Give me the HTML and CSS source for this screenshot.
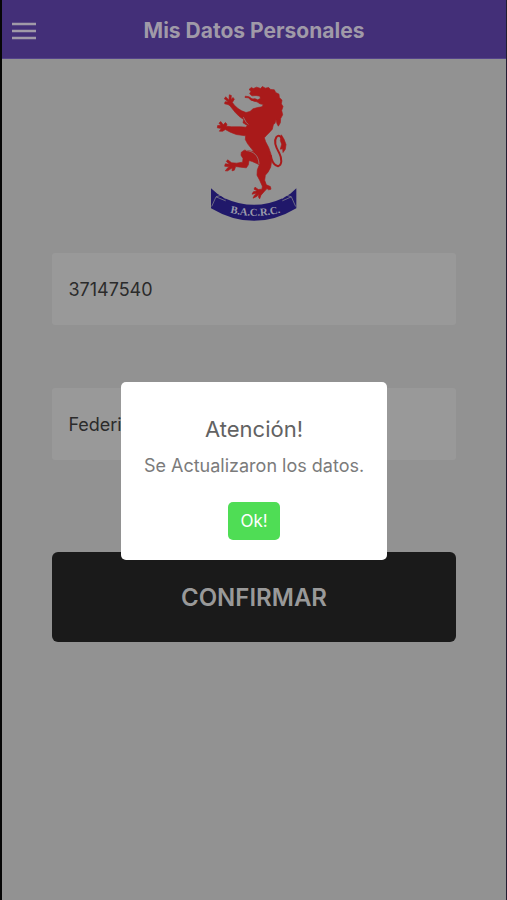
FILE: index.html
```html
<!DOCTYPE html>
<html lang="es">

<head>
  <meta charset="utf-8">
  <meta name="viewport" content="width=device-width, initial-scale=1">
  <title>Mis Datos Personales</title>
  <link rel="stylesheet" href="styles.css">
</head>

<body>
  <header class="toolbar">
    <button type="button" class="menu-button" aria-label="Menú">
      <svg viewBox="0 0 24 18" width="24" height="18">
        <path d="M0 2h24M0 9h24M0 16h24" stroke="currentColor" stroke-width="2.6" />
      </svg>
    </button>
    <h1 class="title">Mis Datos Personales</h1>
  </header>

  <main class="content">
    <svg class="logo" viewBox="28 30 270 410" role="img" aria-label="B.A.C.R.C.">
      <!-- lion -->
      <g fill="#a91a1a" stroke="#a91a1a" stroke-width="2" stroke-linejoin="round">
        <path d="M148 43 L155 37 L161 40 L171 36 L183 40 L188 34 L197 39 L207 37 L213 43 L224 44 L228 52
          L238 57 L239 67 L247 75 L245 86 L250 94 L246 106 L249 119 L243 130 L242 143 L236 153 L232 146
          L229 133 L226 144 L221 149 L218 162 L210 171 L201 180 L194 188 L198 200 L207 217 L214 237
          L216 257 L213 276 L205 291 L197 300 L195 315 L200 329 L212 334 L214 342 L207 344 L202 340
          L193 350 L184 360 L180 371 L176 365 L178 357 L171 364 L160 369 L164 361 L171 354 L157 357
          L161 350 L173 347 L163 342 L166 336 L176 343 L187 342 L188 333 L180 315 L172 300 L173 284
          L179 269 L171 265 L158 259 L148 256 L146 269 L140 278 L123 276 L108 274 L104 285 L97 287
          L98 278 L84 287 L77 287 L84 278 L90 275 L75 273 L77 266 L90 267 L80 259 L84 254 L96 263
          L111 264 L129 261 L130 250 L124 240 L125 231 L134 225 L150 227 L163 230 L155 220 L144 206
          L137 193 L138 182 L110 178 L92 171 L77 163 L69 168 L59 168 L65 160 L53 158 L54 151
          L64 151 L58 144 L63 139 L71 149 L77 142 L82 147 L80 153 L95 155 L122 155 L139 156 L143 151
          L130 143 L132 133 L119 124 L107 112 L98 101 L91 92 L85 88 L75 86 L76 80 L86 80 L74 71
          L78 65 L88 75 L89 59 L95 61 L94 73 L100 67 L104 72 L98 82 L105 91 L115 100 L126 107
          L139 112 L151 109 L160 101 L174 97 L187 95 L191 88 L181 86 L172 80 L163 78 L156 75
          L165 71 L174 74 L182 70 L181 63 L169 61 L157 62 L150 56 L154 48 Z" />
        <path d="M137 63 L148 65 L157 71 L170 72 L166 77 L154 75 L146 68 L136 67 Z" />
        <path d="M245 179 L253 192 L259 208 L257 222 L250 232 L249 221 L242 222 L246 207 L242 196 Z" />
      </g>
      <path d="M213 240 C216 258 222 271 235 273 C248 270 247 250 239 234 C228 216 222 198 230 186
        C237 178 245 182 249 197" fill="none" stroke="#a91a1a" stroke-width="6" />
      <path d="M139 226 C160 228 177 239 178 267" fill="none" stroke="#929292" stroke-width="2" />
      <path d="M131 126 L139 141 L146 148" fill="none" stroke="#929292" stroke-width="2" />

      <!-- ribbon -->
      <path d="M34 339 L53 356 L75 369 Q163 409 249 369 L272 356 L290 339 L290 399 Q163 475 34 399 Z"
        fill="#20186a" />
      <path d="M36 394 L49 365 L78 377 M49 365 L65 360 L78 371 M288 394 L275 365 L248 377 M275 365 L259 360 L248 371"
        fill="none" stroke="#929292" stroke-width="2" />
      <path id="ribbon-line" d="M54 401 Q167 443 280 401" fill="none" />
      <text class="ribbon-text" fill="#9a9aaa" text-anchor="middle">
        <textPath href="#ribbon-line" startOffset="50%">B.A.C.R.C.</textPath>
      </text>
    </svg>

    <form class="form">
      <input type="text" class="field" name="dni" value="37147540" aria-label="DNI">
      <input type="text" class="field" name="nombre" value="Federico" aria-label="Nombre">
      <button type="submit" class="confirm">CONFIRMAR</button>
    </form>
  </main>

  <div class="overlay">
    <div class="alert" role="alertdialog" aria-labelledby="alert-title" aria-describedby="alert-text">
      <h2 class="alert-title" id="alert-title">Atención!</h2>
      <p class="alert-text" id="alert-text">Se Actualizaron los datos.</p>
      <button type="button" class="alert-button">Ok!</button>
    </div>
  </div>
</body>

</html>
```
FILE: styles.css
```css
* {
  box-sizing: border-box;
}

body {
  margin: 0;
  min-height: 100vh;
  border-left: 2px solid #060606;
  border-right: 1px solid #221c30;
  background-color: #929292;
  font-family: Inter, "Liberation Sans", sans-serif;
}

button,
input {
  border: 0;
  font-family: inherit;
}

.toolbar {
  display: grid;
  grid-template-columns: 44px 1fr 44px;
  align-items: center;
  height: 59px;
  padding-top: 3px;
  border-bottom: 1px solid #55448a;
  background-color: #432f78;
  color: #a09aa8;
}

.menu-button {
  display: flex;
  padding: 10px;
  background: none;
  color: inherit;
}

.title {
  margin: 0;
  font-size: 21px;
  font-weight: 700;
  line-height: 28px;
  text-align: center;
}

.content {
  padding: 26px 10%;
}

.logo {
  display: block;
  width: 90px;
  height: 137px;
  margin: 0 auto 31px;
}

.ribbon-text {
  font-family: "Liberation Serif", serif;
  font-size: 32px;
  font-weight: bold;
}

.form {
  display: flex;
  flex-direction: column;
}

.field {
  width: 100%;
  height: 72px;
  margin-bottom: 63px;
  padding: 0 16px;
  border-radius: 3px;
  background-color: #999;
  color: #2b2b2b;
  font-size: 18px;
}

.confirm {
  height: 90px;
  margin-top: 29px;
  border-radius: 6px;
  background-color: #1a1a1a;
  color: #999;
  font-size: 24px;
  font-weight: 600;
}

.overlay {
  position: fixed;
  inset: 0;
  display: flex;
  align-items: center;
  justify-content: center;
  padding: 42px 0 0 1px;
}

.alert {
  display: flex;
  flex-direction: column;
  align-items: center;
  padding: 32px 23px 20px;
  border-radius: 5px;
  background-color: #fff;
}

.alert-title {
  margin: 0 0 9px;
  color: #626262;
  font-size: 22px;
  font-weight: 400;
  line-height: 30px;
}

.alert-text {
  margin: 0 0 23px;
  color: #7b7b7b;
  font-size: 18px;
  line-height: 26px;
}

.alert-button {
  height: 38px;
  padding: 0 12px;
  border-radius: 5px;
  background-color: #4fdd55;
  color: #fff;
  font-size: 17px;
}
```
